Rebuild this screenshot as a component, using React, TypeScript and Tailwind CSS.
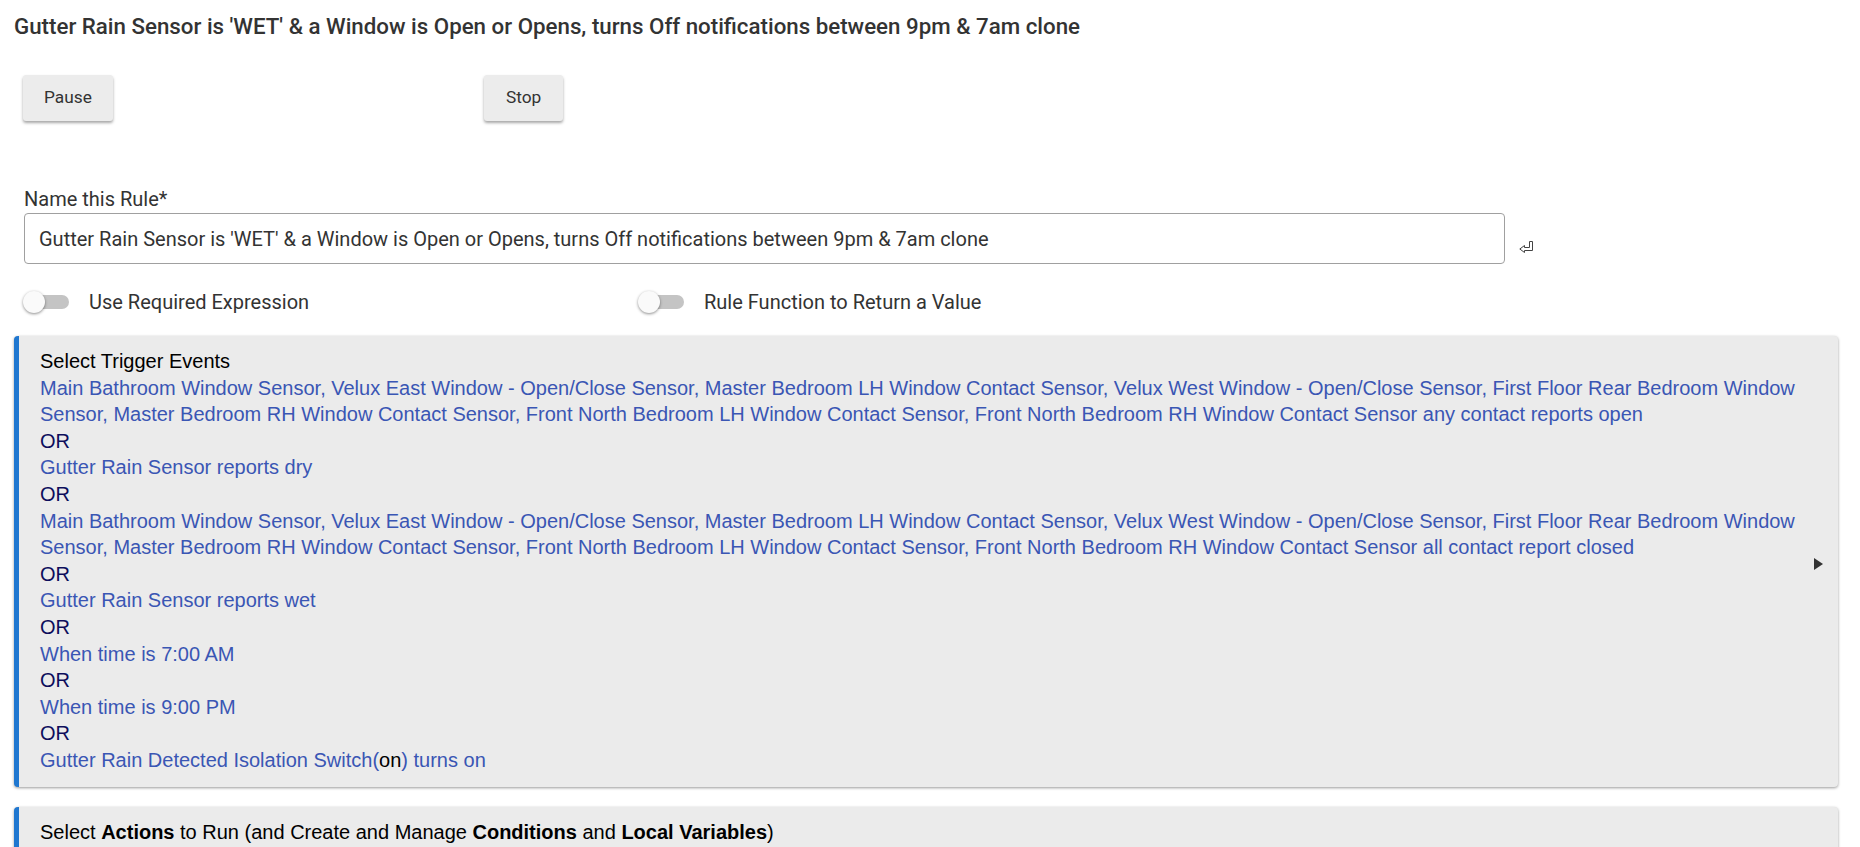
import React from "react";

const devices =
  "Main Bathroom Window Sensor, Velux East Window - Open/Close Sensor, Master Bedroom LH Window Contact Sensor, Velux West Window - Open/Close Sensor, First Floor Rear Bedroom Window Sensor, Master Bedroom RH Window Contact Sensor, Front North Bedroom LH Window Contact Sensor, Front North Bedroom RH Window Contact Sensor";

function Toggle({ label }: { label: string }) {
  return (
    <div className="flex items-center">
      <div className="relative w-[46px] h-[22px] flex items-center">
        <div className="absolute left-[8px] right-[0px] h-[14px] rounded-full bg-[#c4c4c4]" />
        <div className="absolute left-0 w-[22px] h-[22px] rounded-full bg-[#fafafa] shadow-[0_1px_3px_rgba(0,0,0,0.45)]" />
      </div>
      <span className="ml-[20px] text-[20px] text-[#333]">{label}</span>
    </div>
  );
}

function Or() {
  return <div className="text-[#0d0d5c]">OR</div>;
}

function Link({ children }: { children: React.ReactNode }) {
  return <div className="text-[#3a56b4]">{children}</div>;
}

export default function App() {
  return (
    <div className="w-[1860px] h-[847px] overflow-hidden bg-white font-['Roboto',sans-serif]">
      <h1 className="pl-[14px] pt-[12px] text-[22.3px] leading-[28px] font-medium text-[#333]">
        Gutter Rain Sensor is 'WET' &amp; a Window is Open or Opens, turns Off notifications between 9pm &amp; 7am clone
      </h1>

      <div className="grid grid-cols-[461px_461px] pl-[23px] mt-[35px]">
        <div>
          <button className="h-[46px] px-[21px] rounded-[3px] bg-[#ececec] text-[17.3px] text-[#333] shadow-[0_2px_3px_rgba(0,0,0,0.35)]">
            Pause
          </button>
        </div>
        <div>
          <button className="h-[46px] px-[22px] rounded-[3px] bg-[#ececec] text-[17.3px] text-[#333] shadow-[0_2px_3px_rgba(0,0,0,0.35)]">
            Stop
          </button>
        </div>
      </div>

      <div className="pl-[24px] mt-[65px]">
        <div className="text-[20px] leading-[26px] text-[#333]">Name this Rule*</div>
        <div className="flex items-center mt-[1px]">
          <div className="w-[1481px] h-[51px] flex items-center pl-[14px] border border-[#a0a0a0] rounded-[4px] text-[20px] text-[#333]">
            Gutter Rain Sensor is 'WET' &amp; a Window is Open or Opens, turns Off notifications between 9pm &amp; 7am clone
          </div>
          <svg className="ml-[14px] mt-[16px]" width="16" height="12" viewBox="0 0 16 12">
            <path
              d="M10.5 0.5 H13.5 V9.5 H5.5 V11.5 L0.8 8 L5.5 4.5 V6.5 H10.5 Z"
              fill="none"
              stroke="#444"
              strokeWidth="1"
              strokeLinejoin="miter"
            />
          </svg>
        </div>
      </div>

      <div className="grid grid-cols-[615px_1fr] pl-[23px] mt-[23px]">
        <Toggle label="Use Required Expression" />
        <Toggle label="Rule Function to Return a Value" />
      </div>

      <div className="ml-[14px] mr-[22px] mt-[19px] relative rounded-[4px] border-l-[5px] border-[#1f77d0] bg-[#ebebeb] shadow-[0_1px_3px_rgba(0,0,0,0.4)] pl-[21px] pr-[30px] pt-[12px] pb-[13px] font-['Liberation_Sans',Arial,sans-serif] text-[20px] leading-[26.6px]">
        <div className="text-black">Select Trigger Events</div>
        <Link>{devices} any contact reports open</Link>
        <Or />
        <Link>Gutter Rain Sensor reports dry</Link>
        <Or />
        <Link>{devices} all contact report closed</Link>
        <Or />
        <Link>Gutter Rain Sensor reports wet</Link>
        <Or />
        <Link>When time is 7:00 AM</Link>
        <Or />
        <Link>When time is 9:00 PM</Link>
        <Or />
        <Link>
          Gutter Rain Detected Isolation Switch(<span className="text-black">on</span>) turns on
        </Link>
        <svg className="absolute right-[15px] top-[222px]" width="9" height="12" viewBox="0 0 9 12">
          <path d="M0 0 L9 6 L0 12 Z" fill="#333" />
        </svg>
      </div>

      <div className="ml-[14px] mr-[22px] mt-[20px] rounded-[4px] border-l-[5px] border-[#1f77d0] bg-[#ebebeb] shadow-[0_1px_3px_rgba(0,0,0,0.4)] pl-[21px] pt-[12px] pb-[13px] font-['Liberation_Sans',Arial,sans-serif] text-[20px] leading-[26.6px] text-black">
        Select <b>Actions</b> to Run (and Create and Manage <b>Conditions</b> and <b>Local Variables</b>)
      </div>
    </div>
  );
}
